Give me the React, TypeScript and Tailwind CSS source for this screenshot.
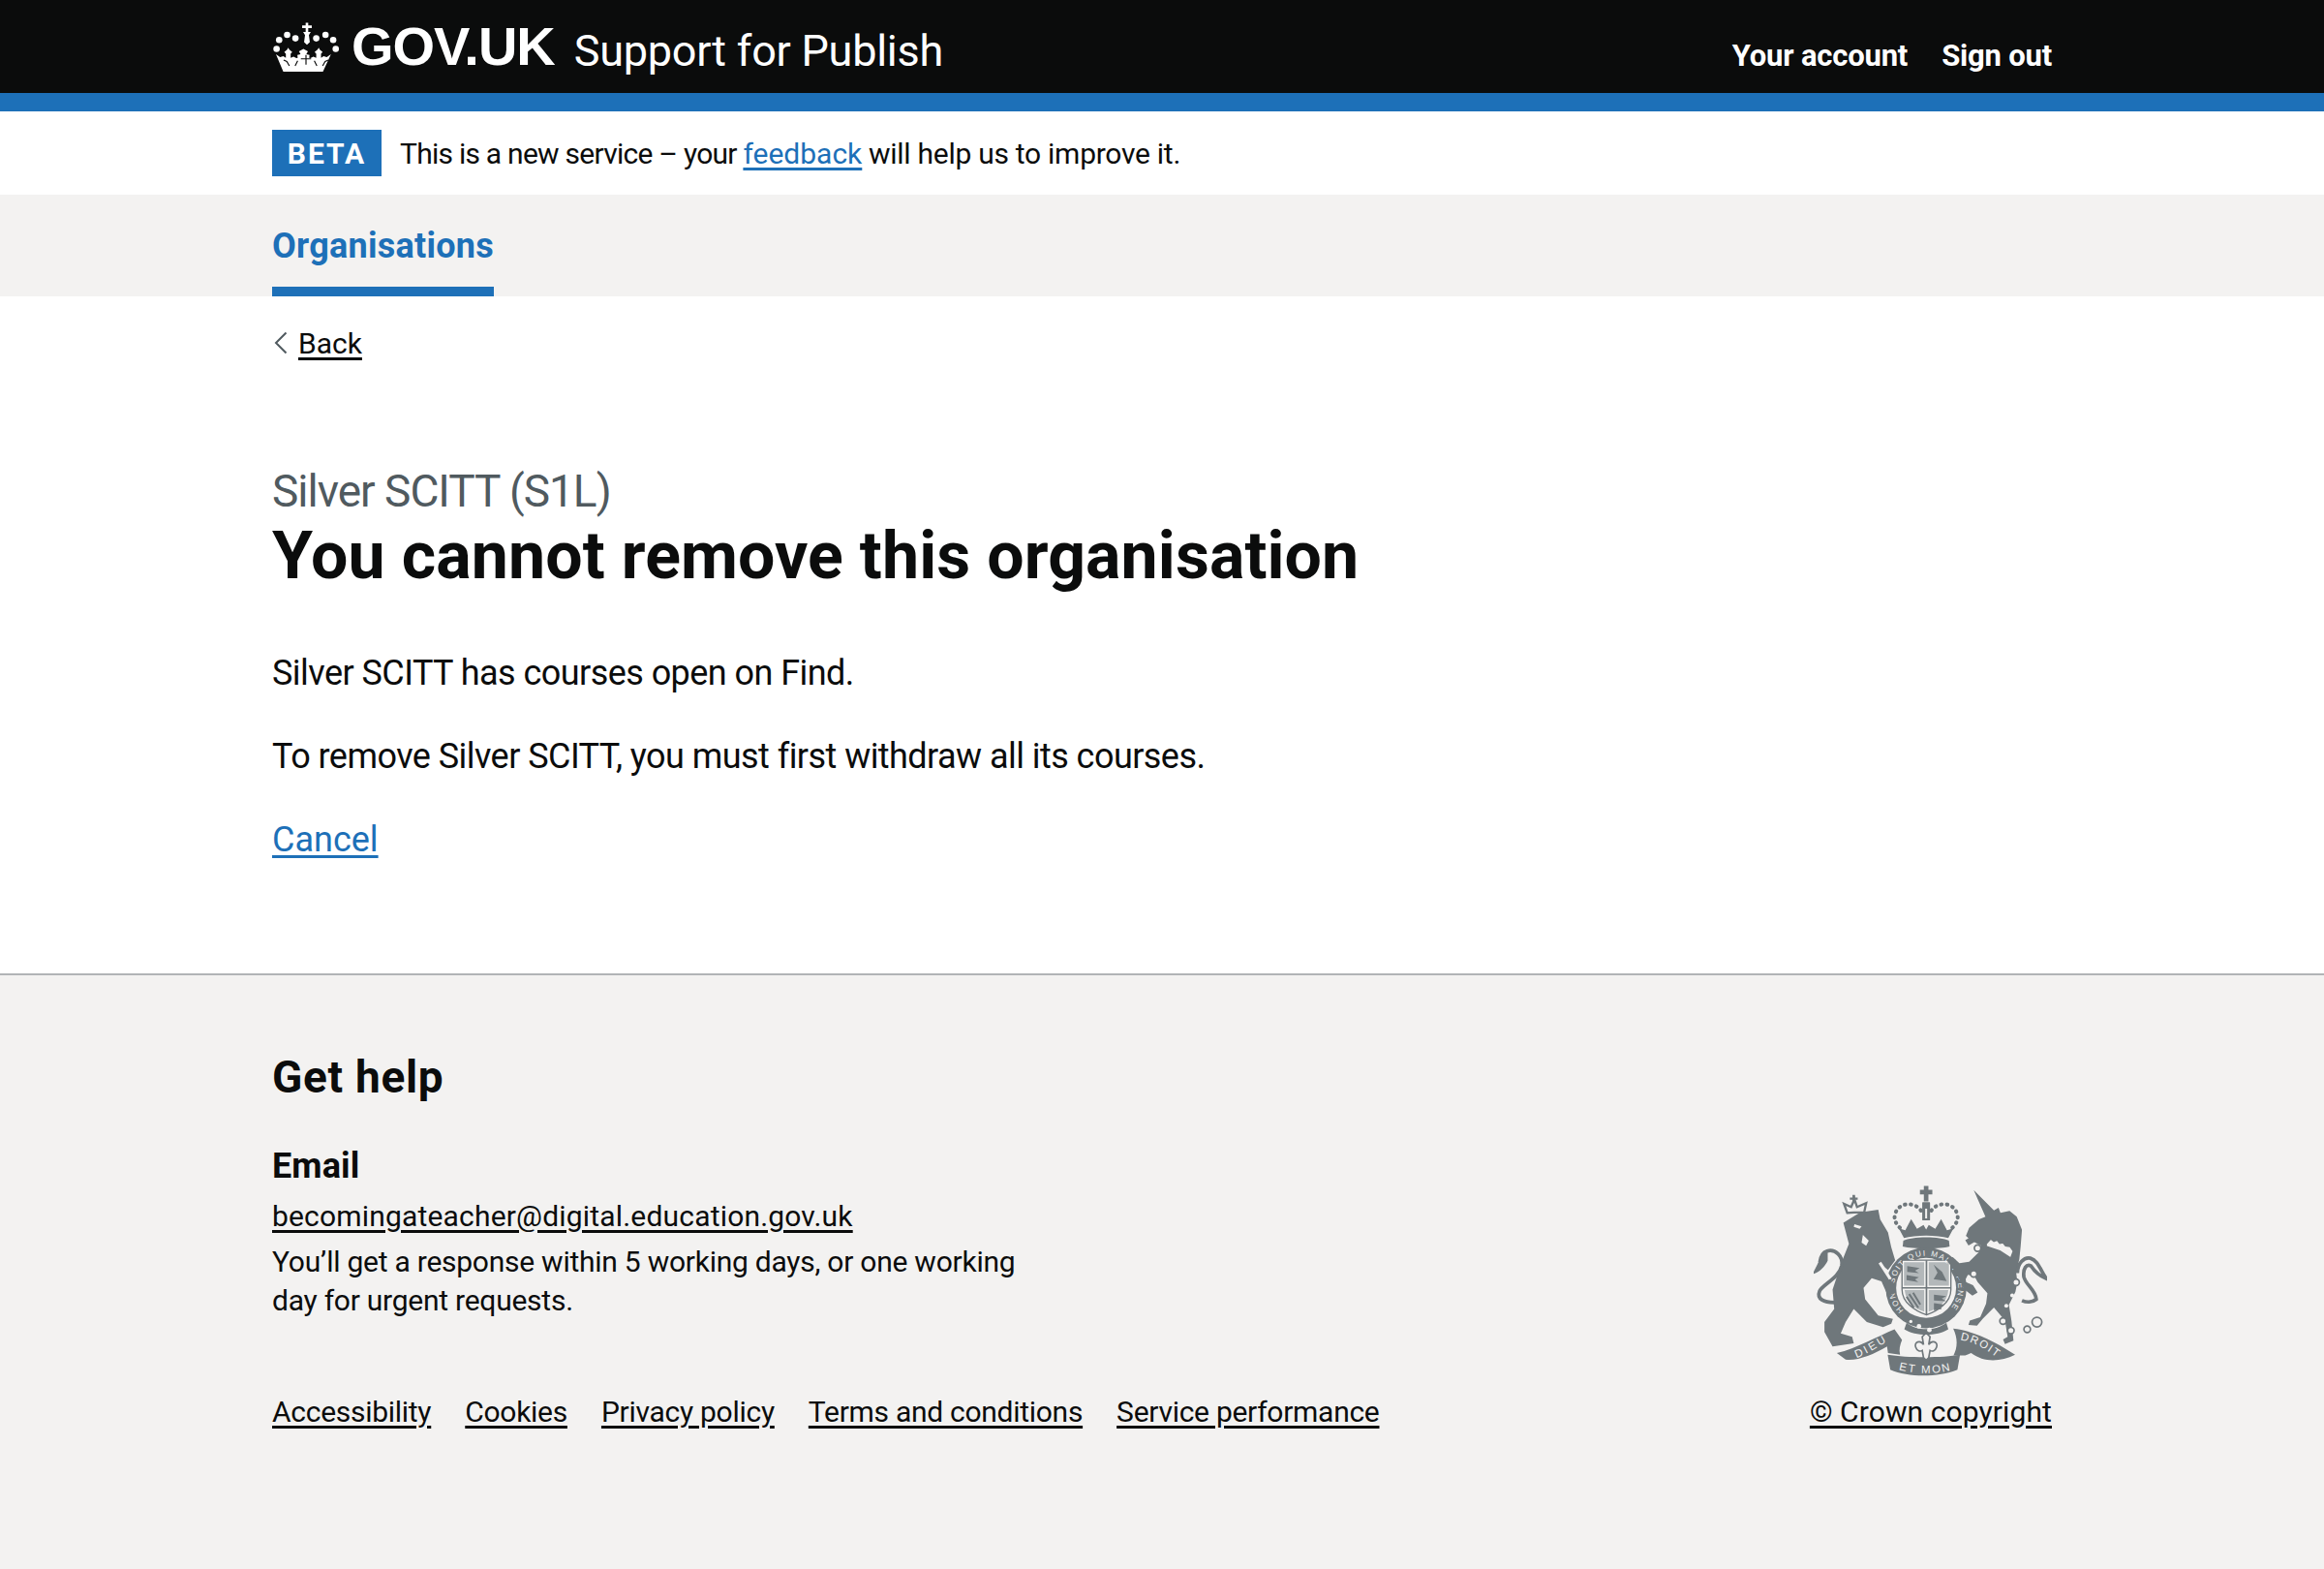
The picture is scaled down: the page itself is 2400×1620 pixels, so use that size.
const footerLinks = ["Accessibility", "Cookies", "Privacy policy", "Terms and conditions", "Service performance"];

function Crown() {
  return (
    <svg viewBox="60 25 215 160" className="w-[71px] h-[53px] shrink-0" fill="#fff">
      <path d="M157 58h8V46h-11v-8h11v-9h8v9h11v8h-11v12h8l-6 10 3 22-9 8-9-8 3-22z" />
      <circle cx="107" cy="67" r="10" />
      <circle cx="133" cy="78" r="10" />
      <circle cx="198" cy="78" r="10" />
      <circle cx="227" cy="67" r="10" />
      <circle cx="82" cy="83" r="10" />
      <circle cx="251" cy="83" r="10" />
      <circle cx="74" cy="111" r="10" />
      <circle cx="259" cy="111" r="10" />
      <path d="M72 128l13 9 10-3 8 5v-13l-5-5 9-8 3-6 4 6 9 8-5 5v13l9-4 9 5 4-1-1-9 10-2-5-9 14-8 14 8-5 9 10 2-1 9 4 1 9-5 9 4v-13l-5-5 9-8 4-6 3 6 9 8-5 5v13l8-5 10 3 13-9-25 54H95z" />
      <path d="M96 146l10 4 8 14M236 146l-10 4-8 14M140 148l-8 16M192 148l8 16M150 142h32M166 130v30" stroke="#0b0c0c" strokeWidth="3.5" fill="none" />
    </svg>
  );
}

function RoyalArms() {
  const gray = "#6f777b";
  const bg = "#f3f2f1";
  return (
    <svg viewBox="107 68 716 588" className="w-[241px] h-[198px]" fill={gray}>
      <defs>
        <path id="garter-text" d="M383 454A98 98 0 1 1 521 454" fill="none" />
        <path id="ribbon-left" d="M238 600C268 590 300 568 338 546" fill="none" />
        <path id="ribbon-mid" d="M368 636C420 650 490 650 532 636" fill="none" />
        <path id="ribbon-right" d="M556 544C600 552 630 570 668 598" fill="none" />
      </defs>

      {/* top crown */}
      <path d="M445 72h14v12h12v14h-12v22h-14V98h-12V84h12z" />
      <path d="M382 240c25-14 115-14 140 0l2 18c-30 8-110 8-144 0z" />
      <path d="M384 232l-16-30 20 6 18-34 18 30 20-12 8 14 8-14 20 12 18-30 18 34 20-6-16 30c-35-10-101-10-136 0z" />
      <rect x="440" y="122" width="24" height="56" rx="2" />
      <rect x="449" y="142" width="6" height="30" fill={bg} />
      <path d="M436 148C420 122 368 118 356 160c-4 20 8 35 22 46M468 148c16-26 68-30 80 12 4 20-8 35-22 46" fill="none" stroke={gray} strokeWidth="12" strokeDasharray="2 16" strokeLinecap="round" />

      {/* garter */}
      <circle cx="452" cy="385" r="124" />
      <path d="M392 492c30 26 90 26 122 0l6 20c-35 22-100 22-135 0z" />
      <circle cx="430" cy="503" r="7" fill={bg} />
      <circle cx="462" cy="514" r="7" fill={bg} />
      <circle cx="405" cy="488" r="5" fill={bg} />
      <circle cx="452" cy="385" r="92" fill={bg} />

      {/* shield */}
      <path d="M378 300h150v90c0 40-40 66-75 78-35-12-75-38-75-78z" fill={bg} stroke={gray} strokeWidth="4" />
      <path d="M384 306h62v72h-62zM460 306h62v72h-62zM386 392h60v66c-28-8-56-28-60-66zM460 392h60c-2 36-32 58-60 66z" fill="#b3b8ba" />
      <path d="M378 385h150M453 300v168" stroke={gray} strokeWidth="5" />
      <path d="M394 318l38 6-14 8 12 8-36-4zM392 346l38 6-12 7 10 8-36-6zM475 314l26 22 14 28-40-6 12-20zM476 406l38 4-14 8 14 8-38-2zM476 432l32 4-12 8 4 6-24 4z" />
      <path d="M400 404l28 42M412 400l22 36M392 412l22 34" fill="none" stroke={gray} strokeWidth="6" />
      <text fill={bg} fontFamily="'Liberation Sans',sans-serif" fontSize="24">
        <textPath href="#garter-text" textLength="450">HONI SOIT QUI MAL Y PENSE</textPath>
      </text>

      {/* lion */}
      <path d="M198 185l52-32 55-8 6 30 24 40 10 45 12 40-22 30-25-20 40 60 10 30-25 10-20-45-30-10-25 30 5 35 40 50 45 10-5 15-25 10-50-15-40-40-25 40-15 35 35 10 5 20-65 10-25-45v-30l30-40-5-60 30-90 20-50z" />
      <path d="M170 430c-30 0-55-10-45-35 8-20 60-40 68-78 5-30-20-52-45-45-14 4-20 18-22 34" fill="none" stroke={gray} strokeWidth="11" />
      <path d="M150 272c-24 10-28 40-48 72 24-8 38-22 48-42z" />
      <path d="M232 190l22 6-6 8-18-6zM258 222l18 18-8 16-14-10z" fill={bg} />
      <path d="M306 310l32 50 8-5-32-50z" fill={bg} />
      {/* lion crown */}
      <path d="M210 155l-10-28 22 10 10-24 8 24 28-12-6 28c-14 0-36 0-52 2z" fill="none" stroke={gray} strokeWidth="7" />
      <path d="M226 100h8v8h8v7h-8v10h-8v-10h-8v-7h8z" />

      {/* unicorn */}
      <path d="M598 85l62 62 14-8 6 16 28-6 22 18 16 40-4 50-4 40-10 40 4 30-6 30-20 40 8 50 6 60-26 10-6-14 14-8-8-50-34-40-34 34-18 22-26-2 4-14 32-10 18-42 4-32-30-34-10-18-20-4-10 20 26 12 14 22-16 10-26-20-24-50-30-40 20-8 20 18 30-4 30-30 6-20-20-10-18 10-10-16 10-6-8-8 10-24 30-26 20-8z" />
      <circle cx="610" cy="263" r="10" fill={bg} stroke={gray} strokeWidth="5" />
      <circle cx="598" cy="342" r="10" fill={bg} stroke={gray} strokeWidth="5" />
      <path d="M636 250l14-16 10 8 10-4 8 10 10-2 8 10 14 2 10 14-8 22-34-22-42-14z" fill={bg} stroke={gray} strokeWidth="5" />
      <circle cx="728" cy="368" r="10" fill={bg} stroke={gray} strokeWidth="5" />
      <circle cx="716" cy="408" r="6" fill={bg} />
      <circle cx="698" cy="440" r="6" fill={bg} />
      <circle cx="688" cy="487" r="10" fill={bg} stroke={gray} strokeWidth="5" />
      <circle cx="712" cy="516" r="10" fill={bg} stroke={gray} strokeWidth="5" />
      <circle cx="762" cy="512" r="10" fill={bg} stroke={gray} strokeWidth="5" />
      <circle cx="792" cy="490" r="15" fill={bg} stroke={gray} strokeWidth="5" />
      <path d="M732 340c0-30 20-50 40-46 22 6 30 34 48 62-20-8-34-20-46-38-14-8-26 8-22 34 6 24 36 40 38 68-12 10-30 10-44 4" fill="none" stroke={gray} strokeWidth="11" />

      {/* motto */}
      <path d="M178 585C240 570 300 535 355 512L378 545C372 560 368 575 372 590L335 585 332 565C290 590 240 610 205 605Z" />
      <path d="M535 510C600 515 680 560 725 590 680 612 630 615 590 585L572 592 536 592C548 570 550 540 535 510Z" />
      <path d="M334 590c60 10 170 10 222 0l-8 46c-60 24-150 24-206 0z" />
      <path d="M440 535l12-12 12 12-4 24c10-16 30-8 24 8-4 12-14 14-20 10l-4 22-8 8-8-8-4-22c-6 4-16 2-20-10-6-16 14-24 24-8z" fill={bg} stroke={gray} strokeWidth="5" />
      <g fill={bg} fontFamily="'Liberation Sans',sans-serif" fontSize="34">
        <text><textPath href="#ribbon-left" textLength="105">DIEU</textPath></text>
        <text><textPath href="#ribbon-mid" textLength="160">ET MON</textPath></text>
        <text><textPath href="#ribbon-right" textLength="125">DROIT</textPath></text>
      </g>
    </svg>
  );
}

export default function App() {
  return (
    <div className="min-h-[1620px] flex flex-col bg-white text-[#0b0c0c] font-['Roboto',sans-serif]">
      <header className="bg-[#0b0c0c] border-b-[19px] border-[#1d70b8] text-white">
        <div className="mx-[281px] h-[96px] flex items-center justify-between">
          <div className="flex items-center">
            <Crown />
            <span className="ml-[11px] text-[56px] leading-none font-bold tracking-[-1px] font-['Liberation_Sans',sans-serif]">GOV.UK</span>
            <span className="ml-[20px] mt-[8px] text-[45px] leading-none tracking-[-0.25px]">Support for Publish</span>
          </div>
          <nav className="flex gap-[35px] mt-[21px] text-[31px] font-bold tracking-[-0.2px]">
            <a>Your account</a>
            <a>Sign out</a>
          </nav>
        </div>
      </header>

      <div className="mx-[281px] h-[86px] flex items-center text-[30px]">
        <strong className="bg-[#1d70b8] text-white h-[48px] w-[113px] flex items-center justify-center font-bold tracking-[2px]">BETA</strong>
        <p className="ml-[19px] tracking-[-0.75px]">
          This is a new service – your <a className="text-[#1d70b8] tracking-normal underline underline-offset-4">feedback</a> <span className="tracking-[-0.27px]">will help us to improve it.</span>
        </p>
      </div>

      <nav className="bg-[#f3f2f1] h-[105px] px-[281px]">
        <a className="h-full inline-flex items-center w-[229px] border-b-[10px] border-[#1d70b8] text-[#1d70b8] text-[36px] font-bold tracking-[0.25px] pt-[11px]">Organisations</a>
      </nav>

      <main className="mx-[281px]">
        <a className="flex items-center mt-[29px] text-[30px] h-[38px]">
          <svg viewBox="0 0 14 24" className="w-[14px] h-[24px] ml-[2px]" fill="none" stroke="#505a5f" strokeWidth="2">
            <path d="M12.5 1.5L2 12l10.5 10.5" />
          </svg>
          <span className="ml-[11px] underline underline-offset-4">Back</span>
        </a>
        <p className="mt-[107px] text-[46px] leading-[54px] tracking-[-1px] text-[#505a5f]">Silver SCITT (S1L)</p>
        <h1 className="mt-[2px] text-[68px] leading-[76px] font-bold tracking-[0.1px]">You cannot remove this organisation</h1>
        <p className="mt-[59px] text-[36px] leading-[48px] tracking-[-0.55px]">Silver SCITT has courses open on Find.</p>
        <p className="mt-[38px] text-[36px] leading-[48px] tracking-[-0.55px]">To remove Silver SCITT, you must first withdraw all its courses.</p>
        <p className="mt-[38px] text-[36px] leading-[48px]">
          <a className="text-[#1d70b8] underline underline-offset-4">Cancel</a>
        </p>
      </main>

      <footer className="mt-[114px] grow bg-[#f3f2f1] border-t-2 border-[#b1b4b6]">
        <div className="mx-[281px] flex items-end justify-between">
          <div>
            <h2 className="mt-[78px] text-[46px] leading-[54px] font-bold tracking-[0.7px]">Get help</h2>
            <h3 className="mt-[41px] text-[36px] leading-[48px] font-bold tracking-[0.1px]">Email</h3>
            <a className="block mt-[8px] text-[30px] leading-[40px] tracking-[0.18px] underline underline-offset-4">becomingateacher@digital.education.gov.uk</a>
            <p className="mt-[7px] w-[800px] text-[30px] leading-[40px] tracking-[-0.25px]">You’ll get a response within 5 working days, or one working day for urgent requests.</p>
            <ul className="mt-[75px] flex gap-[35px] text-[30px] leading-[40px] tracking-[-0.28px]">
              {footerLinks.map((link) => (
                <li key={link}>
                  <a className="underline underline-offset-4">{link}</a>
                </li>
              ))}
            </ul>
          </div>
          <div className="flex flex-col items-center">
            <RoyalArms />
            <a className="mt-[17px] text-[30px] leading-[40px] tracking-[0.1px] underline underline-offset-4">© Crown copyright</a>
          </div>
        </div>
      </footer>
    </div>
  );
}
